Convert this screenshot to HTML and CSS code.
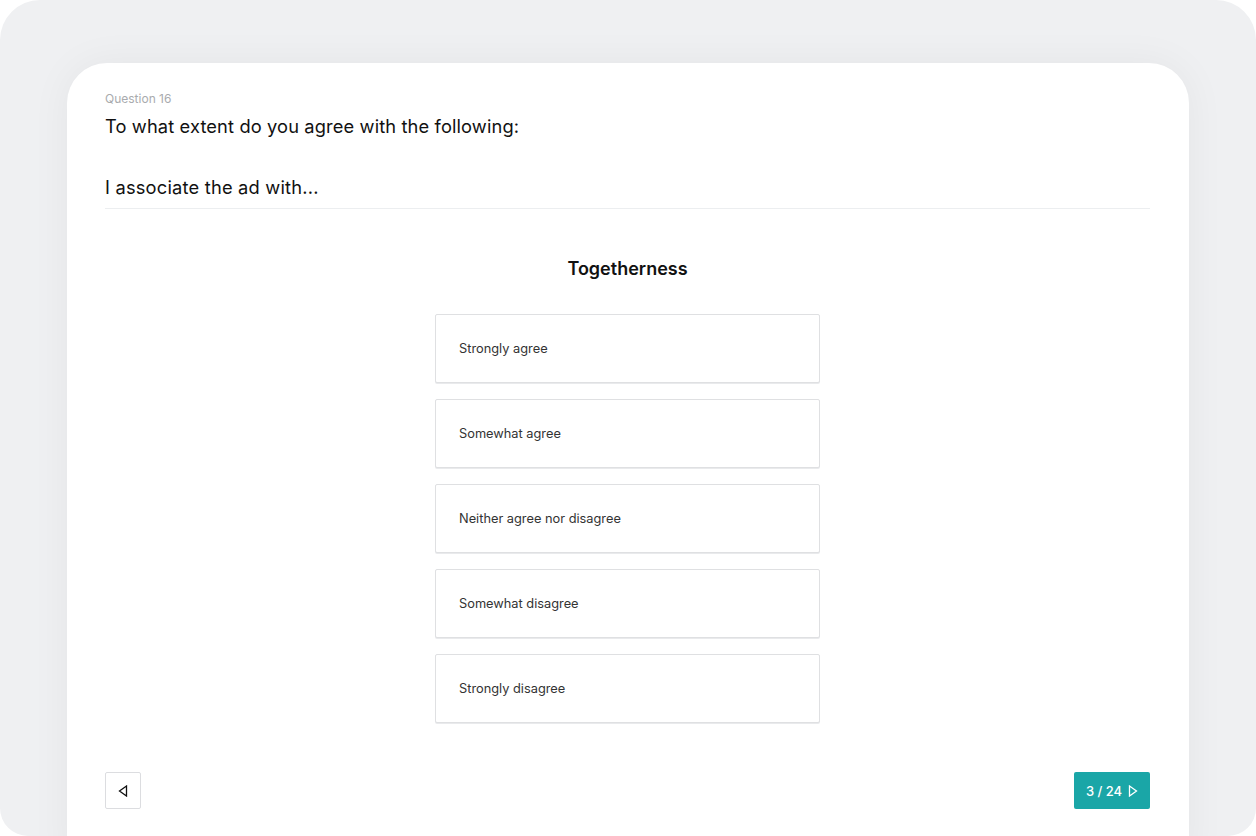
FILE: index.html
```html
<!DOCTYPE html>
<html lang="en">
<head>
<meta charset="utf-8">
<title>Question 16</title>
<link rel="stylesheet" href="styles.css">
</head>
<body>
<div class="frame">
  <main class="card">
    <header class="q-head">
      <div class="q-label">Question 16</div>
      <h1 class="q-title">To what extent do you agree with the following:</h1>
      <h2 class="q-sub">I associate the ad with...</h2>
    </header>
    <section class="q-body">
      <h3 class="item-title">Togetherness</h3>
      <div class="options">
        <button class="option">Strongly agree</button>
        <button class="option">Somewhat agree</button>
        <button class="option">Neither agree nor disagree</button>
        <button class="option">Somewhat disagree</button>
        <button class="option">Strongly disagree</button>
      </div>
    </section>
    <footer class="nav">
      <button class="btn-back" aria-label="Back">
        <svg width="10" height="12" viewBox="0 0 10 12"><path d="M8.5 1 L1.5 6 L8.5 11 Z" fill="none" stroke="#111" stroke-width="1.3" stroke-linejoin="miter"/></svg>
      </button>
      <button class="btn-next">3 / 24
        <svg width="10" height="12" viewBox="0 0 10 12"><path d="M1.5 1 L8.5 6 L1.5 11 Z" fill="none" stroke="#fff" stroke-width="1.3"/></svg>
      </button>
    </footer>
  </main>
</div>
</body>
</html>
```
FILE: styles.css
```css
* { box-sizing: border-box; }
html, body { margin: 0; padding: 0; background: #ffffff; }
body { font-family: Inter, "Noto Sans", "Liberation Sans", sans-serif; color: #111; }

.frame {
  width: 1256px;
  height: 836px;
  background: #eff0f2;
  border-radius: 40px 40px 28px 28px;
  overflow: hidden;
  padding: 63px 67px 0 67px;
}

.card {
  background: #fff;
  border-radius: 40px 40px 0 0;
  height: 800px;
  padding: 28px 39px 0 38px;
  display: flex;
  flex-direction: column;
  box-shadow: 0 0 40px rgba(20, 25, 40, 0.05);
}

.q-head { border-bottom: 1px solid #eceef0; padding-bottom: 9px; }
.q-label { font-size: 12px; line-height: 16px; color: #a9abae; }
.q-title { margin: 7px 0 0; font-size: 18.3px; line-height: 24px; font-weight: 400; color: #111; letter-spacing: 0.12px; }
.q-sub { margin: 37px 0 0; font-size: 18.3px; line-height: 24px; font-weight: 400; color: #111; letter-spacing: 0.2px; }

.q-body { display: flex; flex-direction: column; align-items: center; }
.item-title { margin: 48px 0 0; font-size: 18px; line-height: 24px; font-weight: 600; color: #111; }

.options { margin-top: 33px; display: flex; flex-direction: column; gap: 16px; }
.option {
  width: 385px;
  height: 69px;
  background: #fff;
  border: 1px solid #dfe0e2;
  border-radius: 2px;
  box-shadow: 0 1px 0 #e9eaec;
  text-align: left;
  padding: 0 23px;
  font-family: inherit;
  font-size: 12.8px;
  color: #333;
}

.nav { margin-top: 49px; display: flex; justify-content: space-between; align-items: center; }
.btn-back {
  width: 36px; height: 37px;
  border: 1px solid #dcdde0;
  border-radius: 2px;
  background: #fff;
  display: flex; align-items: center; justify-content: center;
  padding: 0;
}
.btn-next {
  height: 37px;
  width: 76px;
  background: #1aa6a7;
  border: none;
  border-radius: 2px;
  color: #fff;
  font-family: inherit;
  font-size: 13px;
  font-weight: 500;
  display: flex; align-items: center; justify-content: center; gap: 6px;
  padding: 0;
}
```
